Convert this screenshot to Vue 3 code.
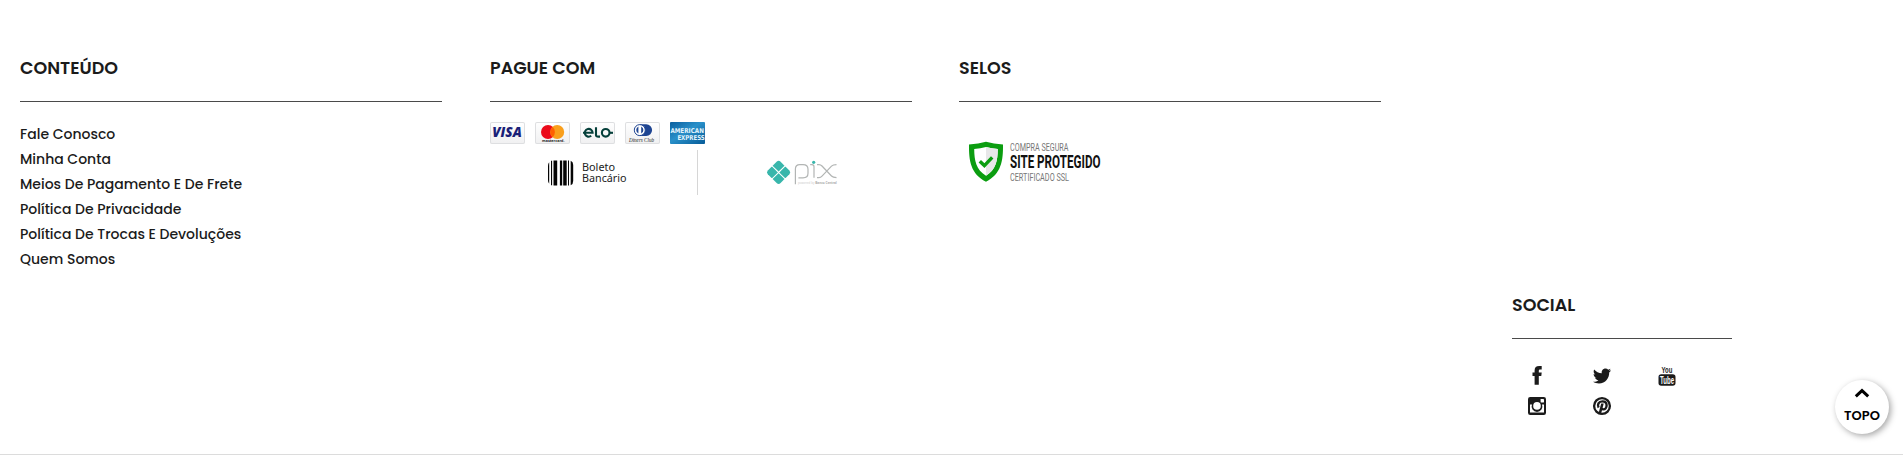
<script setup>
const links = [
  'Fale Conosco',
  'Minha Conta',
  'Meios De Pagamento E De Frete',
  'Política De Privacidade',
  'Política De Trocas E Devoluções',
  'Quem Somos',
]
</script>

<template>
  <footer class="footer">
    <div class="columns">
      <section class="column">
        <h3 class="title">CONTEÚDO</h3>
        <ul class="links">
          <li v-for="link in links" :key="link"><a>{{ link }}</a></li>
        </ul>
      </section>

      <section class="column">
        <h3 class="title">PAGUE COM</h3>
        <div class="cards">
          <svg class="card" viewBox="0 0 35 22">
            <text x="2.3" y="15.4" class="visa" textLength="29.5" lengthAdjust="spacingAndGlyphs">VISA</text>
          </svg>
          <svg class="card" viewBox="0 0 35 22">
            <circle cx="13" cy="10" r="7" fill="#eb0a1b" />
            <circle cx="22.2" cy="10" r="7" fill="#f99f1b" />
            <path d="M17.6 4.8a7 7 0 0 1 0 10.4 7 7 0 0 1 0-10.4z" fill="#ff5f00" />
            <text x="7" y="20" class="master" textLength="22.5" lengthAdjust="spacingAndGlyphs">mastercard.</text>
          </svg>
          <svg class="card" viewBox="0 0 35 22">
            <g fill="none" stroke="#06403b" stroke-width="2.1">
              <path d="M3 10.8H12.6A3.9 3.9 0 1 0 11.2 13.8" />
              <path d="M16 5.3V13.2Q16 14.6 18.6 14.6H20" />
              <circle cx="25.7" cy="10.8" r="3.8" />
              <path d="M29.4 10.8H33" />
            </g>
          </svg>
          <svg class="card" viewBox="0 0 35 22">
            <path d="M14.7 2.2H21.2A5.9 5.9 0 0 1 21.2 14H14.7z" fill="#1f4592" />
            <circle cx="14.8" cy="8.1" r="5.5" fill="#fff" stroke="#1f4592" stroke-width="1" />
            <path d="M13.4 4.6a3.9 3.9 0 0 0 0 7zM16.2 4.6a3.9 3.9 0 0 1 0 7z" fill="#1f4592" />
            <text x="4" y="19.8" class="diners" textLength="25" lengthAdjust="spacingAndGlyphs">Diners Club</text>
          </svg>
          <svg class="card" viewBox="0 0 35 22">
            <defs>
              <linearGradient id="amex" x1="0" x2="1" y1="0" y2="1">
                <stop offset="0" stop-color="#0a5f9f" />
                <stop offset=".45" stop-color="#2990c9" />
                <stop offset="1" stop-color="#075b98" />
              </linearGradient>
            </defs>
            <rect width="35" height="22" rx="1" fill="url(#amex)" />
            <text x="0.4" y="10.7" class="amex-name" textLength="33.5" lengthAdjust="spacingAndGlyphs">AMERICAN</text>
            <text x="7.4" y="17.9" class="amex-name" textLength="27.4" lengthAdjust="spacingAndGlyphs">EXPRESS</text>
          </svg>
        </div>
        <div class="methods">
          <div class="method">
            <svg width="80" height="26" viewBox="0 0 80 26">
              <g fill="#050505">
                <path d="M1.2 2.2V23.8Q0 22.8 0 20V6Q0 3.2 1.2 2.2z" />
                <path d="M3 .7H4.1V25.3H3zM5.5 .5H9.2V25.5H5.5zM11.9 .5H14.2V25.5H11.9zM15.2 .5H18.7V25.5H15.2zM20 .5H21V25.5H20z" />
                <path d="M22.7 .8Q25.2 1.7 25.2 5V21Q25.2 24.3 22.7 25.2z" />
              </g>
              <text x="34" y="11" class="boleto" textLength="33" lengthAdjust="spacingAndGlyphs">Boleto</text>
              <text x="34" y="22" class="boleto" textLength="44.5" lengthAdjust="spacingAndGlyphs">Bancário</text>
            </svg>
          </div>
          <div class="method pix-method">
            <svg width="70" height="26" viewBox="0 0 70 26">
              <g fill="#38b6ab">
                <path d="M5.6 5.7 9.6 1.7Q11.6-.2 13.6 1.7L17.5 5.7 11.6 11.5z" />
                <path d="M5.6 19.1 9.6 23Q11.6 24.9 13.6 23L17.5 19.1 11.6 13.2z" />
                <path d="M4.6 6.8H5.2L10.9 12.4 5.2 18H4.6L.8 14.3Q-.9 12.4 .8 10.5z" />
                <path d="M18.6 6.8H18L12.3 12.4 18 18H18.6L22.4 14.3Q24.1 12.4 22.4 10.5z" />
                <circle cx="46.7" cy="2.3" r="1.6" />
              </g>
              <g fill="none" stroke="#b2b5b4" stroke-width="1.2">
                <path d="M28.4 24.3V9Q28.4 4.6 32.8 4.6H36Q41 4.6 41 9.2V13.2Q41 17.8 36 17.8H31.4" />
                <path d="M43.2 4.6H45Q47 4.6 47 6.8V17.8" />
                <path d="M50 4.6H52Q53.7 4.6 55 6L64.5 16Q66 17.6 69.5 17.6M50 17.6H52Q53.7 17.6 55 16.2L64.5 6.2Q66 4.6 69.5 4.6" />
              </g>
              <text x="31" y="24" class="powered" textLength="16.5" lengthAdjust="spacingAndGlyphs">powered by</text>
              <text x="48.3" y="24" class="powered central" textLength="21.5" lengthAdjust="spacingAndGlyphs">Banco Central</text>
            </svg>
          </div>
        </div>
      </section>

      <section class="column">
        <h3 class="title">SELOS</h3>
        <svg class="seal" width="134" height="42" viewBox="0 0 134 42">
          <path d="M17 .8Q24.5 3 34 3.4C34.2 20 32.2 32.6 17 40.8 1.8 32.6-.2 20 0 3.4Q9.5 3 17 .8z" fill="#0b9d10" />
          <path d="M17 6Q22.5 7.6 28.8 8C28.7 20 26.8 28.5 17 34.8 7.2 28.5 5.3 20 5.2 8Q11.5 7.6 17 6z" fill="#fff" />
          <path d="M17 6Q22.5 7.6 28.8 8C28.7 20 26.8 28.5 17 34.8z" fill="#e7e7e8" />
          <path d="M10.8 20.2 15.4 24.6 23.2 16.4" fill="none" stroke="#0b9d10" stroke-width="3.4" />
          <text x="41" y="9.6" class="seal-small" textLength="58.5" lengthAdjust="spacingAndGlyphs">COMPRA SEGURA</text>
          <text x="41" y="27.2" class="seal-main" textLength="90.5" lengthAdjust="spacingAndGlyphs">SITE PROTEGIDO</text>
          <text x="41" y="39.9" class="seal-small" textLength="59" lengthAdjust="spacingAndGlyphs">CERTIFICADO SSL</text>
        </svg>
      </section>
    </div>

    <section class="social">
      <h3 class="title">SOCIAL</h3>
      <div class="icons">
        <svg viewBox="0 0 20 20">
          <path d="M14.7 .1V3.5H12.9Q11.8 3.5 11.8 4.7V6.6H14.7L14.3 10H11.8V18.8H7.6V10H5.5V6.6H7.6V4.5Q7.6 .1 12.2 .1z" />
        </svg>
        <svg viewBox="0 0 20 20">
          <path d="M19 4.6q-.7 1.1-1.8 1.9C17.4 12 13.6 17.4 7 17.4c-2.2 0-4.2-.6-6-1.7 2 .2 3.900-.3 5.400-1.500-1.700 0-3-1.100-3.500-2.600.6.1 1.100.1 1.700 0-1.800-.4-3-1.900-3-3.700.5.3 1.100.5 1.700.5C1.600 7.200 1.200 5 2.200 3.400c1.900 2.300 4.500 3.700 7.600 3.900C9.200 4.900 11 2.600 13.500 2.600c1.100 0 2 .4 2.700 1.100.9-.2 1.600-.5 2.300-.9-.3.9-.8 1.600-1.500 2q1-.1 2-.6z" />
        </svg>
        <svg viewBox="0 0 20 20">
          <text x="4.6" y="6.700" class="you" textLength="10.8" lengthAdjust="spacingAndGlyphs">You</text>
          <rect x="1.5" y="8.3" width="17" height="11.5" rx="2.8" />
          <text x="3" y="17.800" class="tube" textLength="14" lengthAdjust="spacingAndGlyphs">Tube</text>
        </svg>
        <svg viewBox="0 0 20 20">
          <rect x="1" y="1" width="18" height="18" rx="2.2" />
          <path d="M3 8.5H5A5.4 5.4 0 1 0 15 8.5H17V16.5H3z" fill="#fff" />
          <circle cx="10" cy="9.9" r="3.8" fill="#fff" />
          <rect x="13.6" y="3" width="3.4" height="3.4" rx=".4" fill="#fff" />
        </svg>
        <svg viewBox="0 0 20 20">
          <circle cx="10" cy="10" r="7.9" fill="none" stroke="#1b1b1b" stroke-width="2.3" />
          <path d="M6.6 11.7C4.9 8.7 6.7 5.4 10.4 5.4c2.8 0 4.2 1.7 4.2 3.8 0 2.7-1.5 4.2-3.2 4.2-.9 0-1.6-.4-1.9-1" fill="none" stroke="#1b1b1b" stroke-width="2.4" />
          <path d="M9.2 7.6H11.7L8.9 18.4 6.5 17.6z" />
        </svg>
      </div>
    </section>

    <a class="top">
      <svg width="16" height="10" viewBox="0 0 16 10"><path d="M1.8 8.4 8 2.6 14.2 8.4" fill="none" stroke="#000" stroke-width="3" /></svg>
      <span>TOPO</span>
    </a>
  </footer>
</template>

<style>
body {
  margin: 0;
  background: #fff;
}
</style>

<style scoped>
.footer {
  position: relative;
  box-sizing: border-box;
  width: 1903px;
  height: 455px;
  padding: 55px 0 0 20px;
  border-bottom: 1px solid #dcdcdc;
  overflow: hidden;
  color: #1b1b1b;
  font-family: Poppins, Inter, "Open Sans", sans-serif;
}
.columns {
  display: grid;
  grid-template-columns: 470px 469px 422px;
  height: 237px;
}
.column {
  width: 422px;
}
.title {
  box-sizing: border-box;
  height: 47px;
  margin: 0;
  border-bottom: 1px solid #4a4a4a;
  font-size: 17.5px;
  font-weight: 600;
  line-height: 26px;
  white-space: nowrap;
}
.links {
  margin: 20px 0 0;
  padding: 0;
  list-style: none;
  font-size: 14px;
  font-weight: 500;
  line-height: 25px;
  white-space: nowrap;
}
.cards {
  display: flex;
  gap: 10px;
  margin-top: 20px;
}
.card {
  box-sizing: border-box;
  width: 35px;
  height: 22px;
  border-radius: 2px;
  background: linear-gradient(#fff, #f0f0f1);
  box-shadow: inset 0 0 0 1px #dedfe1;
}
svg {
  overflow: visible;
}
.visa {
  fill: #1a1f78;
  font: italic 800 13.5px "Open Sans", sans-serif;
}
.master {
  fill: #222;
  font: 700 4px "Open Sans", sans-serif;
}
.diners {
  fill: #222;
  font: italic 6px "Liberation Serif", serif;
}
.amex-name {
  fill: #e4f4fc;
  font: 700 6.6px "DejaVu Sans", sans-serif;
}
.methods {
  display: flex;
  height: 45px;
  margin-top: 6px;
}
.method {
  box-sizing: border-box;
  width: 208px;
  padding: 9.5px 0 0 58px;
  border-right: 1px solid #d6d6d6;
}
.pix-method {
  padding: 10px 0 0 69px;
  border: 0;
}
.boleto {
  fill: #222;
  font: 11px "Noto Sans", sans-serif;
}
.powered {
  fill: #ccc;
  font: 3px "Noto Sans", sans-serif;
}
.central {
  fill: #aaa;
  font-weight: 700;
}
.seal {
  display: block;
  margin: 39px 0 0 10px;
}
.seal-small {
  fill: #777;
  font: 11.2px Roboto, sans-serif;
}
.seal-main {
  fill: #111;
  font: 700 18.9px Roboto, sans-serif;
}
.social {
  width: 220px;
  margin-left: 1492px;
}
.icons {
  display: grid;
  grid-template-columns: repeat(3, 50px);
  grid-auto-rows: 20px;
  gap: 10px 15px;
  justify-items: center;
  margin-top: 27px;
  fill: #1b1b1b;
}
.icons svg {
  width: 20px;
  height: 20px;
}
.you {
  font: 700 9.5px "Liberation Sans", sans-serif;
}
.tube {
  fill: #fff;
  font: 700 10.5px "Liberation Sans", sans-serif;
}
.top {
  position: absolute;
  top: 380px;
  left: 1835px;
  display: flex;
  flex-direction: column;
  align-items: center;
  box-sizing: border-box;
  width: 54px;
  height: 54px;
  padding-top: 8px;
  border-radius: 50%;
  background: #fff;
  box-shadow: 2px 2px 6px rgba(0, 0, 0, 0.35);
  color: #000;
  font-size: 13px;
  font-weight: 600;
  line-height: 16px;
}
.top span {
  margin-top: 9.5px;
}
</style>
